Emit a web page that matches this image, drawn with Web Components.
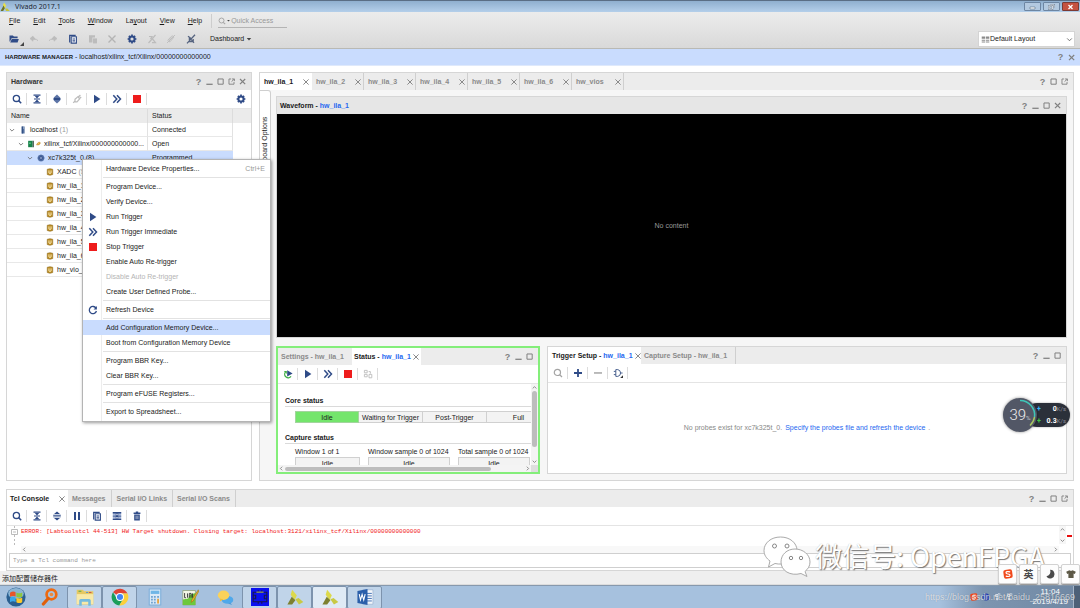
<!DOCTYPE html>
<html lang="en">
<head>
<meta charset="utf-8">
<meta name="viewport" content="width=device-width, initial-scale=1">
<title>Vivado 2017.1</title>
<style>
html, body { height: 100%; margin: 0; }
body { font: 7px/10px "Liberation Sans", "Noto Sans CJK SC", sans-serif; color: #1a1a1a; overflow: hidden; background: #fff; }
</style>
</head>
<body>
<vv-desktop></vv-desktop>
<script>
const base = `
*, *::before, *::after { box-sizing: border-box; }
:host { display: block; box-sizing: border-box; }
button, input, select { font: inherit; color: inherit; margin: 0; padding: 0; border: 0; background: none; outline: 0; border-radius: 0; }
button { display: inline-flex; align-items: center; justify-content: center; white-space: nowrap; }
a { text-decoration: none; color: #2668f0; }
`;
function define(name, css, html) {
  const t = document.createElement('template');
  t.innerHTML = '<style>' + base + css + '</style>' + html;
  customElements.define(name, class extends HTMLElement {
    constructor() {
      super();
      this.attachShadow({ mode: 'open' }).appendChild(t.content.cloneNode(true));
    }
  });
}

const N = '#2f4b87', G = '#bcbcbc', W = '#808080';
const gear = '<circle cx="5" cy="5" r="2.6" fill="none" stroke="' + N + '" stroke-width="2"/><g stroke="' + N + '" stroke-width="1.7"><path d="M5 .6v1.8M5 7.6v1.8M.6 5h1.8M7.6 5h1.8M1.9 1.9l1.2 1.2M6.9 6.9l1.2 1.2M8.1 1.9L6.9 3.1M3.1 6.9L1.9 8.1"/></g>';
const icons = {
  search: `<circle cx="4.4" cy="4.4" r="3.1" fill="none" stroke="${N}" stroke-width="1.3"/><path d="M6.6 6.6L9.2 9.2" stroke="${N}" stroke-width="1.5"/>`,
  searchg: `<circle cx="4.4" cy="4.4" r="3.1" fill="none" stroke="#a4a4a4" stroke-width="1.2"/><path d="M6.6 6.6L9 9" stroke="#a4a4a4" stroke-width="1.3"/>`,
  collapse: `<path d="M1.5 .5h7v1.3h-7zM1.5 8.2h7v1.3h-7zM2 4.5h6v1H2z" fill="${N}"/><path d="M2.8 2h4.4L5 4.4zM2.8 8h4.4L5 5.6z" fill="${N}"/>`,
  expand: `<path d="M5 .6L8 3H2zM5 9.4L8 7H2z" fill="${N}"/><path d="M1.2 3.8h7.6v.9H1.2zM1.2 5.4h7.6v.9H1.2z" fill="${N}"/>`,
  expandf: `<path d="M5 .6L8.2 3.4v3.2L5 9.4 1.8 6.6V3.4z" fill="#5c74a6"/><path d="M1.6 4h6.8v2H1.6z" fill="${N}"/>`,
  plug: `<path d="M1.2 8.8l1.6-1.6M3 5.2L6 2.6l1.6 2.4L5 7.8H3zM6.4 3l2-2M7.8 4.2L9.2 3" fill="none" stroke="${G}" stroke-width="1.2"/>`,
  play: `<path d="M2 .8L8.4 5 2 9.2z" fill="${N}"/>`,
  ff: `<path d="M1.3 1.2L4.8 5 1.3 8.8M5 1.2L8.5 5 5 8.8" fill="none" stroke="${N}" stroke-width="1.5"/>`,
  stop: `<path d="M1 1h8v8H1z" fill="#ee1c1c"/>`,
  gear,
  open: `<path d="M.5 1.4h3.4l1 1.2h3.7v1.6H2.6L1 7.4H.5z" fill="${N}"/><path d="M2.8 5h7L8.6 8.6H1.2z" fill="${N}"/>`,
  undo: `<path d="M4 2L1 4.6l3 2.6V5.4h3.4q1.2 0 1.2 1.6" fill="${G}" stroke="${G}" stroke-width=".7"/>`,
  redo: `<path d="M6 2l3 2.6-3 2.6V5.4H2.6q-1.2 0-1.2 1.6" fill="${G}" stroke="${G}" stroke-width=".7"/>`,
  copy: `<path d="M1.7 8.5V1.3h6" fill="none" stroke="${N}" stroke-width="1.2"/><path d="M3.2 2.7h5.2v6.4H3.2zM4.5 5h2.6M4.5 6.9h2.6" fill="#fff" stroke="${N}" stroke-width="1.1"/>`,
  paste: `<path d="M1 1.2h6v2.4H4.4v5H1z" fill="${G}"/><path d="M5 4.4h4v5H5z" fill="${G}"/>`,
  cross: `<path d="M1.5 1.5l7 7M8.5 1.5l-7 7" stroke="#b4b4b4" stroke-width="1.4"/>`,
  nosig: `<path d="M1.5 9L8.5 1M2 2.5h3L3.5 5M5.5 5l3 3.6H5" fill="none" stroke="${G}" stroke-width="1.2"/>`,
  clip: `<path d="M1.5 6.5l4-4.2q2-1.2 2.4.8L4.2 7.6q-1.6.8-1.5-.8L6 3.6M1 9L9 1" fill="none" stroke="${G}" stroke-width=".9"/>`,
  nodbg: `<path d="M1 9.4L9 .8M2 2.2l3 2.4M5.2 5.6L8 8.8M3.4 3v4.6h3.8V5" fill="none" stroke="#55637f" stroke-width="1.3"/>`,
  min: `<path d="M1.5 7.4h7v1.4h-7z" fill="${W}"/>`,
  max: `<path d="M2.2 2.2h5.8v5.8H2.2z" fill="none" stroke="${W}" stroke-width="1.1"/>`,
  float: `<path d="M4.6 2.2H2.2V8h5.6V5.6M5.6 2.2h2.6v2.4M8 2.4L5 5.2" fill="none" stroke="${W}" stroke-width="1"/>`,
  close: `<path d="M2.2 2.2L8 8M8 2.2L2.2 8" stroke="${W}" stroke-width="1.3"/>`,
  x: `<path d="M2.400 2.400l5.200 5.200M7.600 2.400L2.400 7.600" stroke="#8a8a8a" stroke-width="1"/>`,
  down: `<path d="M2.4 3.8L5 6.4l2.6-2.6" fill="none" stroke="#666" stroke-width="1"/>`,
  up: `<path d="M2.4 6.4L5 3.8l2.6 2.6" fill="none" stroke="#666" stroke-width="1"/>`,
  left: `<path d="M6 2.4L3.4 5 6 7.6" fill="none" stroke="#666" stroke-width="1"/>`,
  right: `<path d="M4 2.4L6.6 5 4 7.6" fill="none" stroke="#666" stroke-width="1"/>`,
  caret: `<path d="M2.2 3.800h5.600L5 7z" fill="#444"/>`,
  host: `<path d="M3.4 .6h3.600v8.800H3.4z" fill="#54719f"/><path d="M3.4 .6h1.400v8.800H3.4z" fill="#2d4a80"/><path d="M5 2h1.4v1H5z" fill="#bcd"/>`,
  board: `<path d="M.2 1h5.600v8H.2z" fill="#17824a"/><path d="M5.800 1h1.600v8H5.800z" fill="#4b5f56"/><path d="M1.4 3h2v2h-2z" fill="#5cc28b"/>`,
  link: `<path d="M1 8L3.200 4l3.600-2.200L9 4 6.400 7.600z" fill="#e0a52c" stroke="#a87418" stroke-width=".8"/><path d="M3 6.400l3.400-2.800" stroke="#fff0b8" stroke-width=".9"/>`,
  chip: `<circle cx="5" cy="5" r="4.200" fill="#5774aa"/><path d="M3.200 3.200h3.600v3.600H3.200z" fill="#c8d6f0" stroke="#2f4b87" stroke-width=".9"/><path d="M5 .8v8.400M.8 5h8.400" stroke="#2f4b87" stroke-width=".7"/>`,
  core: `<path d="M1.600 1.6Q5 .2 8.400 1.6V8.200Q5 9.900 1.600 8.200z" fill="#bd8f28" stroke="#8a6414" stroke-width=".7"/><path d="M3.7 3v3.2q1.3 1.4 2.6 0V3" fill="none" stroke="#fff3c4" stroke-width="1.1"/>`,
  refresh: `<path d="M8 3.2A3.6 3.6 0 1 0 8.4 6" fill="none" stroke="${N}" stroke-width="1.3"/><path d="M8.9 1v3.4H5.6z" fill="${N}"/>`,
  retrig: `<path d="M2.400 3.2A3.4 3.4 0 1 0 8 7.400" fill="none" stroke="#3fae45" stroke-width="1.3"/><path d="M4.2 1.2L9.6 4.4 4.2 7.600z" fill="${N}"/><path d="M.800 2h3v3z" fill="#3fae45"/>`,
  tree: `<path d="M1.4 1.4h2.8v2.4H1.4zM1.4 5.4h2.8v2.4H1.4zM6 5.4h2.8v3.4H6zM5.6 2.6h1.8v2" fill="none" stroke="${G}" stroke-width=".9"/>`,
  plus: `<path d="M4.1 1h1.8v8H4.1zM1 4.1h8v1.8H1z" fill="${N}"/>`,
  minus: `<path d="M1 4h8v1.9H1z" fill="#b8b8b8"/>`,
  gate: `<path d="M2.8 1.6h2Q7.4 2 7.6 5 7.4 8 4.8 8.4h-2zM.8 3.4h2M.8 6.6h2M7.6 5h2" fill="none" stroke="#4a628f" stroke-width="1"/><path d="M10 7.200V10H7.200z" fill="#333"/>`,
  pause: `<path d="M2 1h2v8H2zM6 1h2v8H6z" fill="${N}"/>`,
  cols: `<path d="M.8 1h8.4v8H.8z" fill="#a9b8d8"/><path d="M.8 1h8.4v1.400H.8zM.8 7.800h8.400V9H.8zM3.800 1h2.400v8H3.800zM.8 4.700h8.400v.8H.8z" fill="${N}"/><path d="M4.400 2.800h1.200v1.400H4.400zM4.400 6h1.200v1.400H4.400z" fill="#fff"/>`,
  trash: `<path d="M1.6 1.6h6.8v1.3H1.6zM3.8.6h2.4v1H3.8zM2.2 3.6h5.6V9.4H2.2z" fill="${N}"/><path d="M4.1 4.6v3.6M5.9 4.6v3.6" stroke="#fff" stroke-width=".6"/>`,
  layout: `<path d="M.8 1.600h3.800v2.600H.8zM5.400 1.600h3.800v2.600H5.400zM.8 5.400h3.800v1H.8zM5.400 5.400h3.800v1H5.400zM.8 7.200h3.800v1H.8zM5.400 7.200h3.800v1H5.400z" fill="#8b8b8b"/>`,
  vivado: `<path d="M4.2.4l2 3.4-1.4 2.6-2-3.4z" fill="#e8e04a"/><path d="M3.6 3.4L.6 9h2.6l1.6-2.8z" fill="#6d7328"/><path d="M5 6.4h2.4L9.8 9H6z" fill="#c6c53a"/>`,
  orb: `<circle cx="5" cy="5" r="4.8" fill="#2a5f90"/><ellipse cx="5" cy="3.2" rx="3.9" ry="2.7" fill="#8bb4d2"/><path d="M2 2.900q1.500-1.100 2.800-.3v2.200q-1.300-.7-2.800.1z" fill="#e8562a"/><path d="M5.200 2.700q1.400.9 2.900 0v2.200q-1.500.7-2.900 0z" fill="#8cc63e"/><path d="M2 5.400q1.400-.9 2.800-.1v2.200q-1.300-.7-2.800.1z" fill="#3ba7ea"/><path d="M5.200 5.400q1.400.7 2.900 0v2.200q-1.400.9-2.900 0z" fill="#fbc92c"/>`,
  find: `<circle cx="5.800" cy="3.600" r="2.700" fill="#a9c2dd" stroke="#ee6a10" stroke-width="1.500"/><path d="M4 5.800L1.300 8.900" stroke="#e0600c" stroke-width="1.800" stroke-linecap="round"/><circle cx="5.800" cy="3.600" r="1" fill="#ee8a3c"/>`,
  folder: `<path d="M.4 1h3.400l.7.8h5.100v7.400H.4z" fill="#e6c862"/><path d="M.4 3.400h9.200V9H.4z" fill="#f8e9a8"/><path d="M1.800 9.800V7q0-.9.900-.9h4.600q.9 0 .9.900v2.800H6.800V7.700H3.200v2.100z" fill="#76bade"/><path d="M1.400 1.500h1.600v.6H1.400z" fill="#5aab4c"/><path d="M5.600 2.200h1.200v.5H5.600z" fill="#4a90d8"/><path d="M7.200 2.200h1.400v.5H7.200z" fill="#c44"/>`,
  chrome: `<path d="M5 5L1.120 2.400A4.700 4.700 0 0 1 9.200 3L5 3z" fill="#e04434"/><path d="M1.120 2.400A4.700 4.700 0 0 0 4.600 9.700L6.800 6.100 5 5 3.200 6z" fill="#1a9e5a"/><path d="M9.200 3H5v2l1.800 1.100L4.600 9.700A4.700 4.700 0 0 0 9.200 3z" fill="#fbd03a"/><circle cx="5" cy="5" r="2.200" fill="#fff"/><circle cx="5" cy="5" r="1.700" fill="#4285f4"/>`,
  calc: `<path d="M1.8.6h6.4v8.8H1.8z" fill="#dbe9f6" stroke="#7fb0da" stroke-width=".6"/><path d="M2.6 1.5h4.8v1.8H2.6z" fill="#70b6e6"/><path d="M2.8 4.4h1v1h-1zM4.4 4.4h1v1h-1zM2.8 6h1v1h-1zM4.4 6h1v1h-1zM2.8 7.6h1v1h-1zM4.4 7.6h1v1h-1zM6.2 4.4h1v1h-1z" fill="#6ea2d0"/><path d="M6.2 6h1v2.6h-1z" fill="#e6a23c"/>`,
  notepad: `<path d="M1 1.4h7v8H1z" fill="#f4f7e8" stroke="#8c9a70" stroke-width=".4"/><path d="M1 6.400l3-.6 1-2 3-1v6.600H1z" fill="#6cc83c"/><path d="M2 2.800v2.600h.8M3.600 3v2.400M4.600 5.400V3h1v2.400M6.400 3v2.400" fill="none" stroke="#333" stroke-width=".5"/><path d="M9.6 1L6 6.6l-.4 1.4 1.2-.8L10 1.6z" fill="#e8b52e" stroke="#9a6a10" stroke-width=".3"/>`,
  chat: `<ellipse cx="6.400" cy="6.6" rx="3.200" ry="2.2" fill="#4fa8ea"/><path d="M8 8.2l1 1.2-2.4-.8z" fill="#4f9ad8"/><ellipse cx="4.200" cy="4" rx="3.200" ry="2.6" fill="#fbd25a"/><path d="M2.4 5.8L2 7.6l2-1.2z" fill="#f2bd38"/>`,
  scope: `<path d="M0 0h10v10H0z" fill="#0a10f0"/><path d="M1.2 2.4h7.6v5.2H1.2zM1.2 4h1.4v2H1.2M8.8 4H7.4v2h1.4M4 1.2v1.2M6 1.2v1.2M4 7.6v1.2M6 7.6v1.2" fill="none" stroke="#18184a" stroke-width=".6"/><path d="M3 2.300h4" stroke="#c9d26a" stroke-width=".5"/>`,
  xil: `<path d="M3.400 1l2.600 3-1.200 2.800L2.600 3.800z" fill="#dcd94c"/><path d="M3.200 4.800L.8 9.200h2.6l1.800-2.4z" fill="#7d8030"/><path d="M5.2 6.200l1.800-.6L9.600 7.8 7.200 9.200z" fill="#c8c944"/>`,
  word: `<path d="M3.8 1h5.6v8H3.8z" fill="#f4f7fb" stroke="#8aa4c8" stroke-width=".3"/><path d="M6 3h2.8M6 4.4h2.8M6 5.8h2.8M6 7.2h2.8" stroke="#3869b0" stroke-width=".5"/><path d="M.8 1.6L6.4.6v8.8L.8 8.4z" fill="#2b5faa"/><path d="M1.8 3.4l.7 3.2.9-3 .9 3 .8-3.2" fill="none" stroke="#fff" stroke-width=".6"/>`,
  sogou: `<rect x=".6" y=".6" width="8.8" height="8.8" rx="2" transform="rotate(-8 5 5)" fill="#f0491c"/><path d="M7.2 2.8Q3 2 3 3.8q0 1 2 1.2 2.2.2 2 1.4Q6.600 8 2.800 7.200" fill="none" stroke="#fff" stroke-width="1.2"/>`,
  moon: `<path d="M5 .8A4.300 4.300 0 1 1 1.400 7.200 4.600 4.600 0 0 0 5 .8z" fill="#4a4a4a"/>`,
  shirt: `<path d="M3.400 1.200q1.600 1.200 3.200 0L9.800 2.800 8.800 5l-1.200-.4V9H2.400V4.600L1.200 5 .2 2.800z" fill="#5c5846"/>`,
  globe: `<circle cx="5" cy="5" r="4.400" fill="#1a36a8"/><path d="M5 1v8M2.600 2.200v5.600M7.400 2.200v5.600" stroke="#7f9be8" stroke-width=".8"/>`,
  net: `<path d="M2 2h3v2.400H2zM5 1l3 .4M3 6.600h2v1.800H3z" fill="none" stroke="#f4f8fc" stroke-width="1"/>`
};
customElements.define('vv-icon', class extends HTMLElement {
  constructor() { super(); this.attachShadow({ mode: 'open' }); }
  connectedCallback() {
    this.shadowRoot.innerHTML = '<style>:host{display:inline-flex;flex:none;width:var(--size,10px);height:var(--size,10px)}svg{width:100%;height:100%;display:block}</style><svg viewBox="0 0 10 10" aria-hidden="true">' + icons[this.getAttribute('name')] + '</svg>';
  }
});

/* Row of tool buttons separated by hairlines; icons="a b c", optional end icon. */
customElements.define('vv-tools', class extends HTMLElement {
  constructor() { super(); this.attachShadow({ mode: 'open' }); }
  connectedCallback() {
    const list = this.getAttribute('icons').split(' ');
    const end = this.getAttribute('end');
    this.shadowRoot.innerHTML = '<style>' + base + `
      :host { display: flex; align-items: center; height: 19px; background: #fff; border-bottom: 1px solid #e4e4e4; padding-right: 5px; flex: none; }
      button { width: 20px; height: 12px; border-right: 1px solid #dcdcdc; }
      .end { margin-left: auto; width: 10px; border: 0; }
    </style>` + list.map(n => `<button type="button" aria-label="${n}"><vv-icon name="${n}"></vv-icon></button>`).join('')
      + (end ? `<button class="end" type="button" aria-label="${end}"><vv-icon name="${end}"></vv-icon></button>` : '');
  }
});

/* Window controls at the right end of a panel header. */
customElements.define('vv-controls', class extends HTMLElement {
  constructor() { super(); this.attachShadow({ mode: 'open' }); }
  connectedCallback() {
    this.shadowRoot.innerHTML = '<style>' + base + `
      :host { display: flex; align-items: center; margin-left: auto; padding-right: 3px; flex: none; }
      button { width: 11px; height: 12px; }
      .q { font: bold 9px/12px "Liberation Sans", sans-serif; color: #808080; }
      vv-icon { --size: 9px; }
    </style><button class="q" type="button">?</button>` + this.getAttribute('icons').split(' ').map(n => `<button type="button" aria-label="${n}"><vv-icon name="${n}"></vv-icon></button>`).join('');
  }
});

define('vv-tab', `
  :host { display: flex; align-items: center; padding: 0 4px; height: 17px; font-weight: bold; color: #8a8a8a; border-right: 1px solid #cfcfcf; background: #ececec; white-space: nowrap; flex: none; }
  :host([active]) { background: #fff; color: #1a1a1a; border-right-color: #fff; }
  button { display: block; height: 17px; font-weight: bold; white-space: pre; }
  .x { display: none; width: 10px; margin-left: auto; align-items: center; justify-content: center; }
  :host([closable]) { padding-right: 0; }
  :host([closable]) .x { display: inline-flex; }
`, `<button type="button"><slot></slot></button><button type="button" class="x" aria-label="Close tab"><vv-icon name="x"></vv-icon></button>`);

define('vv-panel', `
  :host { display: flex; flex-direction: column; border: 1px solid #d6d6d6; background: #fff; min-width: 0; min-height: 0; overflow: hidden; }
  header { display: flex; height: 17px; flex: none; background: var(--head, #ececec); align-items: center; }
`, `<header><slot name="head"></slot></header><slot></slot>`);

define('vv-titlebar', `
  :host { display: flex; align-items: center; height: 12px; padding: 0 1px 0 0; flex: none; background: linear-gradient(#8fafcf, #b4cfea); border-top: 1px solid #5a6e85; font: 7px/10px "Noto Sans", sans-serif; color: #1c2430; gap: 5px; }
  div { margin-left: auto; display: flex; gap: 2px; }
  button { width: 17px; height: 9px; border: 1px solid #6d86a3; border-radius: 1px; background: #b3c9e0; }
  .c { background: #c55240; border-color: #7c3a34; }
  svg { width: 7px; height: 6px; }
`, `<vv-icon name="vivado"></vv-icon><span>Vivado 2017.1</span>
<div><button type="button" aria-label="Minimize"><svg viewBox="0 0 7 6"><path d="M1 3h5v2H1z" fill="#fff" stroke="#5d6f85" stroke-width=".6"/></svg></button>
<button type="button" aria-label="Restore"><svg viewBox="0 0 7 6"><path d="M2.500 .8h3.500v3M1 2h3.500v3H1z" fill="none" stroke="#5d6f85" stroke-width="1.400"/><path d="M2.500 .8h3.500v3M1 2h3.500v3H1z" fill="none" stroke="#fff" stroke-width=".7"/></svg></button>
<button type="button" class="c" aria-label="Close"><svg viewBox="0 0 7 6"><path d="M1.500 1l4 4M5.500 1l-4 4" stroke="#fff" stroke-width="1.300"/></svg></button></div>`);

define('vv-mainbar', `
  :host { flex: none; background: linear-gradient(#ececec, #d9d9d9); border-bottom: 1px solid #b9b9b4; }
  nav { display: flex; align-items: center; height: 18px; padding-left: 9px; gap: 13px; }
  .q { display: flex; align-items: center; gap: 1px; border-left: 1px solid #cdcdcd; margin-left: -4px; padding-left: 6px; height: 14px; color: #999; }
  .q label { display: flex; align-items: center; border-bottom: 1px solid #b4b4b4; height: 14px; width: 69px; }
  .q input { width: 52px; height: 10px; }
  .q input::placeholder { color: #999; opacity: 1; }
  .q vv-icon + vv-icon { --size: 5px; }
  .q vv-icon { --size: 8px; }
  .row { display: flex; align-items: center; height: 18px; padding: 0 5px 0 4px; }
  .set { display: flex; width: 197px; }
  .set button { flex: 1; height: 14px; }
  .set button:first-child { position: relative; }
  .set button:first-child::after { content: ""; position: absolute; right: 0; bottom: 0; border: 2px solid; border-color: transparent #444 #444 transparent; }
  .dash { margin-left: 9px; gap: 1px; }
  .dash vv-icon { --size: 8px; }
  .sel { margin-left: auto; position: relative; display: flex; align-items: center; width: 97px; height: 16px; background: #fff; border: 1px solid #d4d4d4; padding-left: 2px; }
  select { appearance: none; flex: 1; height: 14px; }
  .sel vv-icon { --size: 9px; pointer-events: none; }
`, `<nav aria-label="Main menu"><button type="button"><span><u>F</u>ile</span></button><button type="button"><span><u>E</u>dit</span></button><button type="button"><span><u>T</u>ools</span></button><button type="button"><span><u>W</u>indow</span></button><button type="button"><span>La<u>y</u>out</span></button><button type="button"><span><u>V</u>iew</span></button><button type="button"><span><u>H</u>elp</span></button>
<div class="q"><label><vv-icon name="searchg"></vv-icon><vv-icon name="caret"></vv-icon><input type="text" placeholder="Quick Access" aria-label="Quick Access"></label></div></nav>
<div class="row"><div class="set">${'open undo redo copy paste cross gear nosig clip nodbg'.split(' ').map(n => `<button type="button" aria-label="${n}"><vv-icon name="${n}"></vv-icon></button>`).join('')}</div>
<button class="dash" type="button"><span>Dashboard</span><vv-icon name="caret"></vv-icon></button>
<div class="sel"><vv-icon name="layout"></vv-icon><select aria-label="Layout"><option>Default Layout</option></select><vv-icon name="down"></vv-icon></div></div>`);

define('vv-heading', `
  :host { display: flex; align-items: center; height: 17px; flex: none; padding: 0 0 0 5px; background: #c9dcfe; border-bottom: 1px solid #dfe9fb; }
  h1 { font: inherit; margin: 0; white-space: pre; }
  b { font-size: 6px; }
`, `<h1><b>HARDWARE MANAGER</b> - localhost/xilinx_tcf/Xilinx/00000000000000</h1><vv-controls icons="close"></vv-controls>`);

const cores = ['XADC', 'hw_ila_1', 'hw_ila_2', 'hw_ila_3', 'hw_ila_4', 'hw_ila_5', 'hw_ila_6', 'hw_vio_1'];
define('vv-hardware', `
  :host { display: flex; flex: 0 0 246px; min-height: 0; }
  vv-panel { flex: 1; --head: #e6e6e6; }
  h2 { font: bold 7px/10px "Liberation Sans", sans-serif; margin: 0 0 0 4px; color: #333; }
  table { border-collapse: separate; border-spacing: 0; width: 100%; table-layout: fixed; }
  th { background: #ebebeb; text-align: left; font-weight: normal; height: 14px; padding: 0 4px; border-right: 1px solid #dcdcdc; }
  td { height: 14px; padding: 0 4px; border-right: 1px solid #e2e2e2; border-bottom: 1px solid #e8e8e8; white-space: nowrap; overflow: hidden; }
  th:first-child { width: 141px; }
  th:last-child { width: 18px; border: 0; }
  td:last-child { border: 0; }
  tr.on td { background: #c9dcfe; border-color: #c9dcfe; }
  tr.on td:last-child { background: #fff; }
  .n { display: flex; align-items: center; gap: 3px; padding-left: calc(var(--d) * 9px); margin-left: -3px; }
  .n vv-icon { --size: 8px; }
  .n vv-icon + vv-icon[name="link"] { --size: 5px; margin-left: -3px; }
  .leaf { padding-left: 38px; }
  i { font-style: normal; color: #999; }
`, `<vv-panel><h2 slot="head">Hardware</h2><vv-controls slot="head" icons="min max float close"></vv-controls>
<vv-tools icons="search collapse expandf plug play ff stop" end="gear"></vv-tools>
<table><thead><tr><th>Name</th><th>Status</th><th></th></tr></thead><tbody>
<tr><td><div class="n" style="--d:0"><vv-icon name="down"></vv-icon><vv-icon name="host"></vv-icon><span>localhost <i>(1)</i></span></div></td><td>Connected</td><td></td></tr>
<tr><td><div class="n" style="--d:1"><vv-icon name="down"></vv-icon><vv-icon name="board"></vv-icon><vv-icon name="link"></vv-icon><span>xilinx_tcf/Xilinx/000000000000...</span></div></td><td>Open</td><td></td></tr>
<tr class="on"><td><div class="n" style="--d:2"><vv-icon name="down"></vv-icon><vv-icon name="chip"></vv-icon><span>xc7k325t_0 (8)</span></div></td><td>Programmed</td><td></td></tr>
${cores.map((c, i) => `<tr><td><div class="n leaf"><vv-icon name="core"></vv-icon><span>${c}${i ? '' : ' <i>(System Monitor)</i>'}</span></div></td><td></td><td></td></tr>`).join('')}
</tbody></table></vv-panel>`);

define('vv-status', `
  :host { display: flex; flex: 0 0 264px; min-height: 0; }
  vv-panel { flex: 1; border: 2px solid #84ee7a; }
  em { font-style: normal; color: #2668f0; }
  vv-tab[closable] { width: 69px; padding-left: 2px; }
  vv-tab { padding-left: 3px; padding-right: 8px; border: 0; }
  .body { display: grid; grid-template-columns: 1fr 7px; grid-template-rows: 1fr 7px; flex: 1; min-height: 0; }
  .view { overflow: hidden; padding: 12px 0 0 7px; min-width: 0; min-height: 0; }
  h3 { font: bold 7px/10px "Liberation Sans", sans-serif; margin: 0; border-bottom: 1px solid #dadada; }
  .steps { display: grid; grid-template-columns: repeat(4, 64px); margin: 4px 0 10px 10px; }
  .steps span, .idle { border: 1px solid #d0d0d0; background: #f3f3f3; height: 12px; line-height: 11px; text-align: center; }
  .steps span + span { border-left: 0; }
  .steps .on { background: #74e56c; border-color: #a3d49e; }
  .caps { display: grid; grid-template-columns: 65px 82px 72px; gap: 0 8px; margin: 3px 0 0 10px; white-space: nowrap; }
  .v, .h { display: flex; align-items: center; background: #f4f4f4; }
  .v { flex-direction: column; }
  .v vv-icon, .h vv-icon { --size: 7px; }
  .v div { width: 5px; height: 56px; border-radius: 3px; background: #bdbdbd; }
  .h div { height: 4px; width: 206px; border-radius: 3px; background: #bdbdbd; }
  .v vv-icon:last-child { margin-top: auto; }
  .h vv-icon:last-child { margin-left: auto; }
  .corner { background: #dedede; }
`, `<vv-panel><vv-tab slot="head">Settings - hw_ila_1</vv-tab><vv-tab slot="head" active closable>Status - <em>hw_ila_1</em></vv-tab><vv-controls slot="head" icons="min max"></vv-controls>
<vv-tools icons="retrig play ff stop tree"></vv-tools>
<div class="body"><div class="view"><h3>Core status</h3><div class="steps"><span class="on">Idle</span><span>Waiting for Trigger</span><span>Post-Trigger</span><span>Full</span></div>
<h3>Capture status</h3><div class="caps"><span>Window 1 of 1</span><span>Window sample 0 of 1024</span><span>Total sample 0 of 1024</span><span class="idle">Idle</span><span class="idle">Idle</span><span class="idle">Idle</span></div></div>
<div class="v"><vv-icon name="up"></vv-icon><div></div><vv-icon name="down"></vv-icon></div><div class="h"><vv-icon name="left"></vv-icon><div></div><vv-icon name="right"></vv-icon></div><div class="corner"></div></div></vv-panel>`);

define('vv-trigger', `
  :host { display: flex; flex: 1; min-width: 0; }
  vv-panel { flex: 1; }
  em { font-style: normal; color: #2668f0; }
  vv-tab[closable] { width: 93px; }
  vv-tab:not([closable]) { padding-right: 8px; padding-left: 3px; }
  p { margin: auto; color: #888; display: flex; gap: 3px; }
`, `<vv-panel><vv-tab slot="head" active closable>Trigger Setup - <em>hw_ila_1</em></vv-tab><vv-tab slot="head">Capture Setup - hw_ila_1</vv-tab><vv-controls slot="head" icons="min max"></vv-controls>
<vv-tools icons="searchg plus minus gate"></vv-tools>
<p><span>No probes exist for xc7k325t_0.</span><a href="#probes">Specify the probes file and refresh the device</a><span>.</span></p></vv-panel>`);

define('vv-dashboard', `
  :host { display: flex; flex: 1; min-width: 0; min-height: 0; }
  .outer { flex: 1; background: #f6f6f6; }
  vv-tab { width: 52px; }
  .in { display: flex; flex: 1; min-height: 0; }
  .side { writing-mode: vertical-rl; transform: rotate(180deg); width: 11px; height: 113px; border: 1px solid #cfcfcf; border-right: 0; border-radius: 0 0 0 3px; background: #fff; font-weight: normal; flex: none; }
  .grid { flex: 1; display: flex; flex-direction: column; gap: 8px; padding: 6px 6px 6px 5px; min-width: 0; }
  .wave { flex: 1; --head: #e6e6e6; }
  .wave h2 { font: bold 7px/10px "Liberation Sans", sans-serif; margin: 0 0 0 3px; }
  em { font-style: normal; color: #2668f0; }
  .black { flex: 1; background: #000; color: #999; display: flex; align-items: center; justify-content: center; }
  .low { display: flex; gap: 7px; height: 128px; }
`, `<vv-panel class="outer">${['hw_ila_1', 'hw_ila_2', 'hw_ila_3', 'hw_ila_4', 'hw_ila_5', 'hw_ila_6', 'hw_vios'].map((t, i) => `<vv-tab slot="head" closable ${i ? '' : 'active'}>${t}</vv-tab>`).join('')}<vv-controls slot="head" icons="max float"></vv-controls>
<div class="in"><button class="side" type="button">Dashboard Options</button><div class="grid"><vv-panel class="wave"><h2 slot="head">Waveform - <em>hw_ila_1</em></h2><vv-controls slot="head" icons="min max close"></vv-controls><div class="black">No content</div></vv-panel>
<div class="low"><vv-status></vv-status><vv-trigger></vv-trigger></div></div></div></vv-panel>`);

define('vv-console', `
  :host { display: flex; flex: none; padding: 0 6px; }
  vv-panel { flex: 1; }
  .a { width: 61px; padding-left: 3px; }
  vv-tab:not(.a) { padding-right: 6px; }
  vv-tab:nth-of-type(n+3) { padding-right: 5px; }
  .log { display: flex; height: 27px; font: 6px/8px "Liberation Mono", monospace; color: #f01818; }
  .fold { width: 14px; flex: none; }
  .fold svg { width: 14px; height: 20px; display: block; }
  .main { flex: 1; display: flex; flex-direction: column; min-width: 0; }
  pre { margin: 0; padding-top: 2px; font: inherit; flex: 1; }
  .h { display: flex; justify-content: space-between; background: #f8f8f8; height: 7px; }
  .h vv-icon, .v vv-icon { --size: 7px; }
  .v { width: 7px; display: flex; flex-direction: column; justify-content: space-between; background: #f6f6f6; height: 18px; }
  .mark { width: 7px; padding-top: 9px; }
  .mark::before { content: ""; display: block; width: 5px; height: 2px; margin-left: 1px; background: #e80c0c; }
  input { display: block; margin: 0 2px 2px; height: 15px; border: 1px solid #cfcfcf; padding: 0 3px; font: 6px/10px "Liberation Mono", monospace; }
  input::placeholder { color: #999; opacity: 1; }
`, `<vv-panel><vv-tab slot="head" class="a" active closable>Tcl Console</vv-tab><vv-tab slot="head">Messages</vv-tab><vv-tab slot="head">Serial I/O Links</vv-tab><vv-tab slot="head">Serial I/O Scans</vv-tab><vv-controls slot="head" icons="min max float"></vv-controls>
<vv-tools icons="search collapse expand pause copy cols trash"></vv-tools>
<div class="log"><div class="fold"><svg viewBox="0 0 14 20"><path d="M7.500 0v3M7.500 9v10" stroke="#bbb" stroke-dasharray="2 2"/><path d="M4.500 3.500h6v5h-6zM6 6h3" fill="none" stroke="#bbb"/></svg></div>
<div class="main"><pre>ERROR: [Labtoolstcl 44-513] HW Target shutdown. Closing target: localhost:3121/xilinx_tcf/Xilinx/00000000000000</pre><div class="h"><vv-icon name="left"></vv-icon><vv-icon name="right"></vv-icon></div></div><div class="v"><vv-icon name="up"></vv-icon><vv-icon name="down"></vv-icon></div><div class="mark"></div></div>
<input type="text" placeholder="Type a Tcl command here" aria-label="Tcl command"></vv-panel>`);

define('vv-statusbar', `
  :host { height: 14px; flex: none; background: #efefef; padding: 0 2px; line-height: 16px; font-family: "Liberation Sans", "Noto Sans CJK SC", sans-serif; border-bottom: 1px solid #ddd; }
`, `添加配置储存器件`);

const items = [['Hardware Device Properties...', , 'Ctrl+E'], 0, ['Program Device...'], ['Verify Device...'], ['Run Trigger', 'play'], ['Run Trigger Immediate', 'ff'], ['Stop Trigger', 'stop'], ['Enable Auto Re-trigger'], ['Disable Auto Re-trigger', , , 'off'], ['Create User Defined Probe...'], 0, ['Refresh Device', 'refresh'], 0, ['Add Configuration Memory Device...', , , 'on'], ['Boot from Configuration Memory Device'], 0, ['Program BBR Key...'], ['Clear BBR Key...'], 0, ['Program eFUSE Registers...'], 0, ['Export to Spreadsheet...']];
define('vv-menu', `
  :host { position: absolute; left: 82px; top: 159px; width: 189px; background: linear-gradient(90deg, transparent 18px, #ededed 18px, #ededed 19px, transparent 19px), #fff; border: 1px solid #b4b4b4; padding: 1px 0 2px; box-shadow: 1px 1px 3px #0006; }
  button { display: grid; grid-template-columns: 20px 1fr auto; width: 100%; height: 15px; text-align: left; padding-right: 5px; justify-content: stretch; }
  button vv-icon { justify-self: center; --size: 10px; }
  .t { padding-left: 3px; grid-column: 2; }
  .k { color: #999; }
  .off { color: #b4b4b4; }
  .on { background: #c9dcfe; }
  hr { margin: 1px 0 1px 20px; border: 0; height: 1px; background: #e2e2e2; }
`, items.map(m => m ? `<button type="button" class="${m[3] || ''}" ${m[3] === 'off' ? 'disabled' : ''}>${m[1] ? `<vv-icon name="${m[1]}"></vv-icon>` : ''}<span class="t">${m[0]}</span>${m[2] ? `<span class="k">${m[2]}</span>` : ''}</button>` : '<hr>').join(''));

define('vv-gauge', `
  :host { position: absolute; right: 10px; top: 398px; width: 67px; height: 34px; }
  .pill { position: absolute; left: 22px; right: 0; top: 5px; height: 24px; border-radius: 12px; background: #2b303a; box-shadow: 0 0 2px #0006; color: #fff; font: bold 7px/12px Roboto, sans-serif; padding: 0 4px 0 10px; }
  .pill div { display: flex; align-items: center; height: 12px; }
  .pill i { font: 6px/12px Roboto, sans-serif; color: #8b8f9c; }
  .pill b { margin-right: auto; color: #38b6ff; padding-left: 2px; }
  .pill div + div b { color: #45c948; }
  .disc { position: absolute; left: 0; top: 0; width: 34px; height: 34px; border-radius: 50%; background: #525766; box-shadow: 0 0 3px #0007; color: #eee; display: flex; align-items: center; justify-content: center; font: 300 15px/34px Roboto, sans-serif; }
  .disc small { font-size: 6px; padding-top: 5px; }
  svg { position: absolute; left: 0; top: 0; width: 34px; height: 34px; }
`, `<div class="pill"><div><b>+</b>0<i>K/s</i></div><div><b>+</b>0.3<i>K/s</i></div></div><div class="disc">39<small>%</small><svg viewBox="0 0 34 34"><path d="M17 2.500A14.500 14.500 0 0 1 31.500 19" fill="none" stroke="#3ec6b8" stroke-width="1.500"/><path d="M31.500 19A14.500 14.500 0 0 1 27 27.500" fill="none" stroke="#a8c860" stroke-width="1.500"/></svg></div>`);

define('vv-taskbar', `
  :host { display: flex; height: 23px; flex: none; background: linear-gradient(90deg, #a6c1de 0 87%, #7d95b0 91%, #7088a3 100%); border-top: 1px solid #8799ad; position: relative; align-items: center; padding-right: 12px; }
  button { width: 35px; height: 23px; --size: 18px; border: 1px solid transparent; flex: none; }
  button:first-of-type { width: 32px; --size: 20px; }
  .w { border-color: #7d93ad; background: #c0d4e9; border-radius: 2px; }
  .on { background: #dfeaf5; }
  .tray { margin-left: auto; display: flex; gap: 4px; --size: 8px; align-items: center; margin-right: 18px; }
  time { color: #fff; font-size: 8px; line-height: 10px; text-align: center; display: block; }
  .desk { position: absolute; right: 0; top: 0; width: 7px; height: 22px; background: #4d6178; border-left: 1px solid #a5b5c8; }
`, `${[['orb'], ['find'], ['folder', 'w'], ['chrome', 'w'], ['calc'], ['notepad'], ['chat'], ['scope', 'w'], ['xil', 'w'], ['xil', 'w on'], ['word', 'w']].map(b => `<button type="button" class="${b[1] || ''}" aria-label="${b[0]}"><vv-icon name="${b[0]}"></vv-icon></button>`).join('')}
<div class="tray"><vv-icon name="sogou"></vv-icon><vv-icon name="globe"></vv-icon><vv-icon name="net"></vv-icon><vv-icon name="net"></vv-icon></div><time>11:04<br>2019/4/19</time><div class="desk"></div>`);

define('vv-ime', `
  :host { position: absolute; right: 0; bottom: 24px; display: flex; gap: 2px; }
  button { width: 19px; height: 20px; background: #fdfdfd; border: 1px solid #d2d2d2; border-radius: 2px; box-shadow: 0 1px 1px #0005; font: bold 10px/16px "Noto Sans CJK SC", sans-serif; color: #4a4a4a; }
`, `<button type="button" aria-label="Input method"><vv-icon name="sogou"></vv-icon></button><button type="button">英</button><button type="button" aria-label="Half width"><vv-icon name="moon"></vv-icon></button><button type="button" aria-label="Skin"><vv-icon name="shirt"></vv-icon></button>`);

define('vv-watermark', `
  :host { position: absolute; right: 35px; bottom: 31px; display: flex; align-items: center; gap: 4px; pointer-events: none; color: #fff; font: 400 27px/40px "Noto Sans CJK SC", sans-serif; white-space: pre; text-shadow: 1px 1px 1px #777, 0 0 1px #bbb; }
  svg { width: 48px; height: 42px; }
`, `<svg viewBox="0 0 48 42"><g fill="#fff" stroke="#aaa" stroke-width="1"><path d="M17.500 2C8 2 1 8 1 15.500c0 4.500 2.500 8 6 10.500l-1.500 6 6.500-3.500c8 2 21-1 22-13C34 8 27 2 17.500 2z"/><path d="M32 14c8 0 15 5.500 15 13 0 4-2 7-5 9.500l2 5-6-3c-11 3-20-3-20-11.500C18 19.500 24 14 32 14z"/></g><g fill="#fff" stroke="#888"><circle cx="11.500" cy="11" r="2"/><circle cx="24" cy="11" r="2"/><circle cx="28" cy="23" r="1.700"/><circle cx="38" cy="23" r="1.700"/></g></svg><span>微信号: OpenFPGA</span>`);

define('vv-credit', `
  :host { position: absolute; right: 5px; bottom: 5px; pointer-events: none; color: #ffffffb0; font-size: 9px; line-height: 12px; text-shadow: 0 0 1px #0004; }
`, `https://blog.csdn.net/baidu_25816669`);

define('vv-desktop', `
  :host { position: relative; display: flex; flex-direction: column; height: 100vh; overflow: hidden; }
  main { flex: 1; display: flex; gap: 7px; padding: 6px 6px 8px; min-height: 0; }
`, `<vv-titlebar></vv-titlebar><vv-mainbar></vv-mainbar><vv-heading></vv-heading>
<main><vv-hardware></vv-hardware><vv-dashboard></vv-dashboard></main>
<vv-console></vv-console><vv-statusbar></vv-statusbar><vv-taskbar></vv-taskbar>
<vv-menu></vv-menu><vv-gauge></vv-gauge><vv-watermark></vv-watermark><vv-ime></vv-ime><vv-credit></vv-credit>`);
</script>
</body>
</html>
